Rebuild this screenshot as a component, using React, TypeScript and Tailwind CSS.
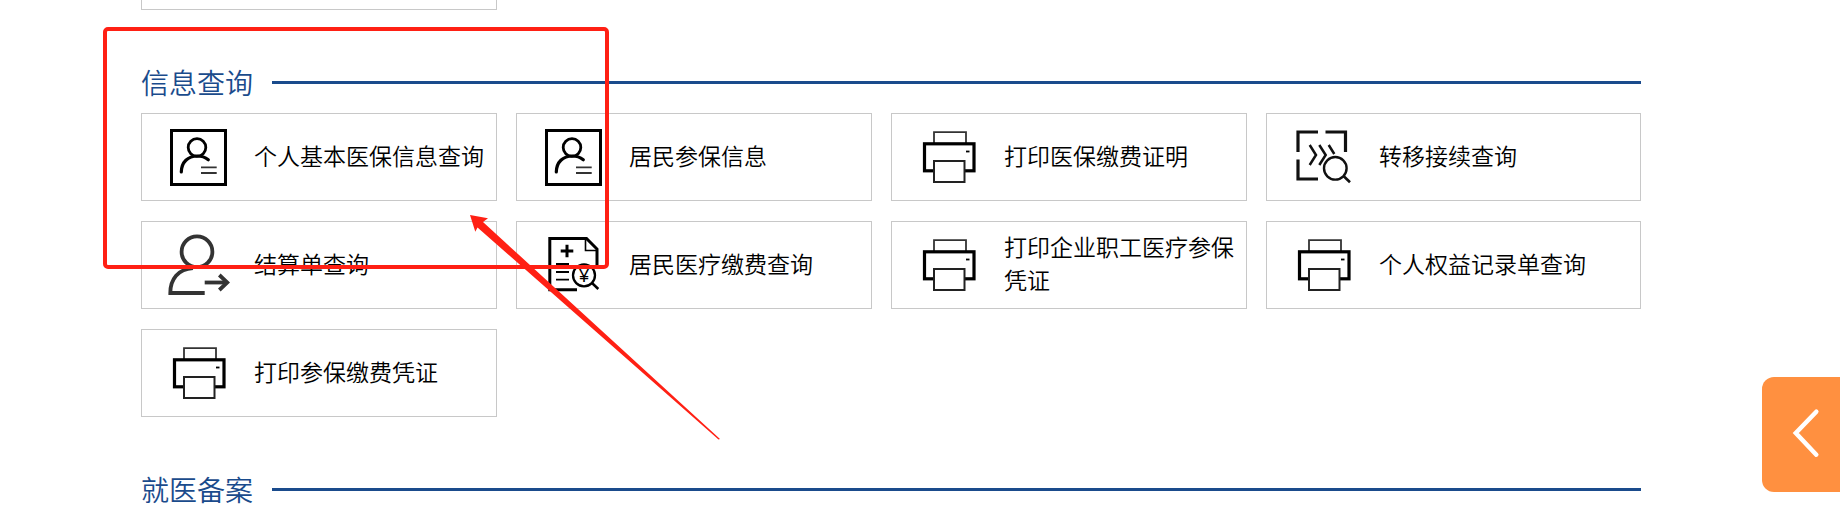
import type { ReactNode } from "react";

function PersonCardIcon() {
  return (
    <g fill="none" stroke="#000">
      <rect x="3.5" y="4.5" width="54" height="54" strokeWidth="3" />
      <circle cx="29" cy="21.5" r="8.8" strokeWidth="2.8" />
      <path d="M13.3 46C13.5 36 20 30 29.3 30C34 30 37.5 31.5 40.3 33.7" strokeWidth="3.2" strokeLinecap="round" />
      <path d="M33 41.3H48.7M33 47H48.7" stroke="#333" strokeWidth="1.8" />
    </g>
  );
}

function PrinterIcon() {
  return (
    <g fill="none" stroke="#000">
      <path d="M16 17V6.2H48V17" stroke="#333" strokeWidth="1.8" />
      <rect x="6.5" y="17.8" width="49.5" height="27" strokeWidth="3.2" />
      <rect x="16" y="35" width="30.5" height="21" fill="#fff" stroke="#222" strokeWidth="2" />
      <path d="M48 25.5H51.5" strokeWidth="1.8" />
    </g>
  );
}

function TransferIcon() {
  return (
    <g fill="none" stroke="#111">
      <path d="M5 26V6H25M32.5 6H52.5V26M5 33.5V53H25" strokeWidth="3.2" />
      <path d="M16.7 19L23 29L16.7 39M26.3 19L32.7 29L26.3 39M35.7 19L41.3 28" strokeWidth="2.5" />
      <circle cx="42.3" cy="42.3" r="11.3" strokeWidth="2.4" />
      <path d="M50.5 50L57 56.3" strokeWidth="2.6" />
    </g>
  );
}

function PersonArrowIcon() {
  return (
    <g fill="none" stroke="#333" strokeWidth="3.8">
      <circle cx="29" cy="17.8" r="15.4" />
      <path d="M36.7 59H2.3C2.3 45.5 10 35 25 34.2" />
      <path d="M36.7 48.5H59" />
      <path d="M51.3 41L59.3 48.5L51.3 56" />
    </g>
  );
}

function BillIcon() {
  return (
    <g fill="none" stroke="#000">
      <path d="M34 55.7H6.8V4.5H43.5L54 15V32" strokeWidth="3" />
      <path d="M42.5 5V16.5H54" strokeWidth="1.6" />
      <path d="M17.7 17H30.3M24 10.7V23.3" strokeWidth="3" />
      <path d="M13 30H26M13 38H26M13 45.7H26" strokeWidth="1.8" />
      <circle cx="41" cy="41.3" r="11" strokeWidth="2.3" />
      <path d="M49 49L55.3 55" strokeWidth="2.5" />
      <text x="41" y="48" textAnchor="middle" fontSize="18" fill="#000" stroke="none" fontFamily="Liberation Sans, sans-serif">
        ¥
      </text>
    </g>
  );
}

const services: { label: string; icon: ReactNode }[] = [
  { label: "个人基本医保信息查询", icon: <PersonCardIcon /> },
  { label: "居民参保信息", icon: <PersonCardIcon /> },
  { label: "打印医保缴费证明", icon: <PrinterIcon /> },
  { label: "转移接续查询", icon: <TransferIcon /> },
  { label: "结算单查询", icon: <PersonArrowIcon /> },
  { label: "居民医疗缴费查询", icon: <BillIcon /> },
  { label: "打印企业职工医疗参保凭证", icon: <PrinterIcon /> },
  { label: "个人权益记录单查询", icon: <PrinterIcon /> },
  { label: "打印参保缴费凭证", icon: <PrinterIcon /> },
];

function SectionTitle({ children }: { children: string }) {
  return (
    <div className="flex h-[41px] items-center mt-[52px] mb-2.5 gap-[19px]">
      <h2 className="pb-0.5 text-[28px] leading-[40px] font-[350] text-[#1a4b8c]">{children}</h2>
      <div className="h-[3px] flex-1 bg-[#1a4b8c]" />
    </div>
  );
}

export default function App() {
  return (
    <div className="relative min-h-screen overflow-hidden bg-white font-['Noto_Sans_CJK_SC',sans-serif]">
      <main className="pl-[141px] pr-[199px]">
        {/* tail of the section above */}
        <div className="grid grid-cols-4">
          <div className="mr-[19px] h-2.5 border border-t-0 border-[#c8c8c8]" />
        </div>

        <section>
          <SectionTitle>信息查询</SectionTitle>
          <div className="grid grid-cols-4 gap-y-5">
            {services.map((item) => (
              <a
                key={item.label}
                href="#"
                className="mr-[19px] nth-[4n]:mr-0 flex h-[88px] items-center gap-6 border border-[#c8c8c8] pl-[26px] pr-2"
              >
                <svg viewBox="0 0 62 62" className="size-[62px] shrink-0" aria-hidden="true">
                  {item.icon}
                </svg>
                <span className="pb-1 text-[23px] leading-[33px] font-[350] text-black">{item.label}</span>
              </a>
            ))}
          </div>
        </section>

        <section>
          <SectionTitle>就医备案</SectionTitle>
        </section>
      </main>

      <button
        type="button"
        aria-label="展开"
        className="absolute right-0 top-[377px] h-[115px] w-[78px] rounded-l-xl bg-[#ff9040]"
      >
        <svg viewBox="0 0 78 115" className="size-full" fill="none" stroke="#fff" strokeWidth="4.5" strokeLinecap="round">
          <path d="M54.3 34.7L33.8 56L54.3 77.7" />
        </svg>
      </button>

      {/* highlight box and pointer */}
      <div className="pointer-events-none absolute left-[103px] top-[27px] h-[242px] w-[506px] rounded-[5px] border-4 border-[#ff2014]" />
      <svg viewBox="0 0 252 226" className="pointer-events-none absolute left-[469px] top-[214px] h-[226px] w-[252px]">
        <path d="M1 1L19 4.3L14 8L251 225L249.5 225.5L8.5 13.5L6.3 17.7Z" fill="#ff2014" />
      </svg>
    </div>
  );
}
